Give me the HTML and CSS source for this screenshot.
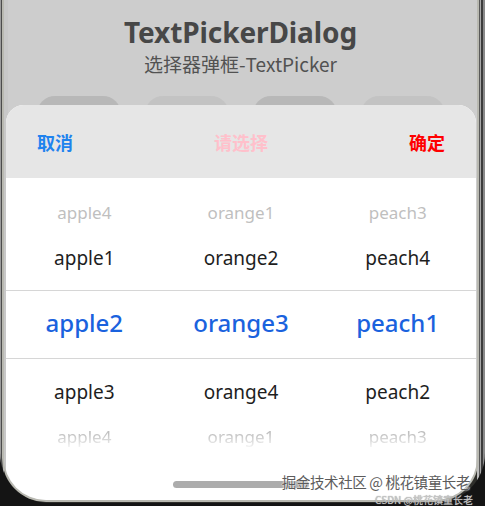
FILE: index.html
```html
<!DOCTYPE html>
<html lang="zh">
<head>
<meta charset="utf-8">
<title>TextPickerDialog</title>
<link rel="stylesheet" href="styles.css">
</head>
<body>
<div class="device">
  <div class="screen">
    <header class="page-head">
      <h1 class="page-title">TextPickerDialog</h1>
      <p class="page-sub">选择器弹框-TextPicker</p>
    </header>
    <div class="btn-row">
      <span class="btn btn-dark"></span>
      <span class="btn"></span>
      <span class="btn btn-dark"></span>
      <span class="btn"></span>
    </div>

    <div class="dialog">
      <div class="dialog-bar">
        <span class="bar-cancel">取消</span>
        <span class="bar-title">请选择</span>
        <span class="bar-ok">确定</span>
      </div>
      <div class="picker">
        <div class="row row-far">
          <span>apple4</span><span>orange1</span><span>peach3</span>
        </div>
        <div class="row row-near">
          <span>apple1</span><span>orange2</span><span>peach4</span>
        </div>
        <div class="row row-selected">
          <span>apple2</span><span>orange3</span><span>peach1</span>
        </div>
        <div class="row row-near">
          <span>apple3</span><span>orange4</span><span>peach2</span>
        </div>
        <div class="row row-far row-fade">
          <span>apple4</span><span>orange1</span><span>peach3</span>
        </div>
      </div>
      <div class="home-bar"></div>
    </div>
  </div>
  <div class="mark">
    <span class="mark-main">掘金技术社区 @ 桃花镇童长老</span>
    <span class="mark-sub">CSDN @桃花镇童长老</span>
  </div>
</div>
</body>
</html>
```

FILE: styles.css
```css
html, body {
  margin: 0;
  padding: 0;
}

body {
  width: 485px;
  height: 506px;
  overflow: hidden;
  background: #141414;
  font-family: "Noto Sans", "Noto Sans CJK SC", sans-serif;
}

/* phone body: dark shell, thin metal rim around the screen */
.device {
  position: relative;
  width: 485px;
  height: 503px;
  box-sizing: border-box;
  padding: 0 8px 3px 4px;
  border-radius: 0 0 50px 50px;
  background:
    linear-gradient(90deg,
      #9c9c9c 0 1px, #4c4c4c 1px 3px, #b4b4b4 3px 4px,
      transparent 4px calc(100% - 8px),
      #bdbdbd calc(100% - 8px) calc(100% - 6px),
      #5a5a5a calc(100% - 6px) calc(100% - 5px),
      #a9a9a9 calc(100% - 5px) calc(100% - 4px),
      #3c3c3c calc(100% - 4px) calc(100% - 2px),
      #8a8a8a calc(100% - 2px) 100%),
    #2e2e2a;
}

.screen {
  position: relative;
  height: 100%;
  overflow: hidden;
  border-radius: 0 0 42px 42px;
  background: #cdcdcd;
  box-shadow: 0 0 0 2px #b9b9b1, inset 14px 0 0 -10px #c8c8c8;
}

.page-head {
  padding-top: 13px;
  text-align: center;
}

.page-title {
  margin: 0;
  font-size: 28px;
  line-height: 38px;
  font-weight: 700;
  color: #474747;
  letter-spacing: -0.1px;
}

.page-sub {
  margin: 0;
  font-size: 19px;
  line-height: 26px;
  color: #525252;
  font-family: "Noto Sans CJK SC", sans-serif;
}

.btn-row {
  display: flex;
  gap: 24px;
  padding: 19px 0 0 33px;
}

.btn {
  width: 84px;
  height: 36px;
  border-radius: 18px;
  background: #c3c3c3;
}

.btn-dark {
  background: #b8b8b8;
}

/* bottom sheet */
.dialog {
  position: absolute;
  left: 2px;
  right: 1px;
  top: 105px;
  bottom: 0;
  border-radius: 18px 18px 0 0;
  background: #fff;
  overflow: hidden;
}

.dialog-bar {
  height: 73px;
  box-sizing: border-box;
  padding: 1px 31px 0 31px;
  display: flex;
  align-items: center;
  justify-content: space-between;
  background: #e6e6e6;
  font-family: "Noto Sans CJK SC", sans-serif;
  font-size: 18px;
  font-weight: 700;
}

.bar-cancel { color: #1f83ee; }
.bar-title  { color: #ffc0cb; }
.bar-ok     { color: #ff0000; }

.picker {
  padding-top: 12px;
}

.row {
  display: grid;
  grid-template-columns: repeat(3, 1fr);
  text-align: center;
  height: 45px;
  align-items: center;
}

.row-far {
  font-size: 17px;
  color: #bfbfbf;
}

.row-near {
  font-size: 19px;
  color: #1e1e1e;
}

.row-selected {
  box-sizing: border-box;
  height: 69px;
  margin: 10px 0;
  padding-bottom: 3px;
  border-top: 1px solid #d6d6d6;
  border-bottom: 1px solid #d6d6d6;
  font-size: 24px;
  font-weight: 500;
  line-height: 1;
  color: #1a62de;
}

.row-fade span {
  -webkit-mask-image: linear-gradient(to bottom, #000 35%, rgba(0,0,0,0.15) 100%);
  mask-image: linear-gradient(to bottom, #000 35%, rgba(0,0,0,0.15) 100%);
}

.home-bar {
  position: absolute;
  left: 167px;
  bottom: 12px;
  width: 136px;
  height: 7px;
  border-radius: 4px;
  background: #acacac;
}

/* site watermark stamped over the capture */
.mark {
  position: absolute;
  right: 14px;
  bottom: -2px;
  display: flex;
  flex-direction: column;
  align-items: flex-end;
  font-family: "Noto Sans CJK SC", sans-serif;
}

.mark-main {
  font-size: 14.5px;
  line-height: 15px;
  letter-spacing: -0.4px;
  color: #5c5c5c;
  text-shadow: 0 0 2px #fff, 0 0 1px #fff;
  margin-right: 1px;
}

.mark-sub {
  font-size: 10px;
  line-height: 10px;
  color: #c8c8c8;
  text-shadow: 0 0 1px #888;
  margin-top: 6px;
  margin-right: -2px;
}
```
